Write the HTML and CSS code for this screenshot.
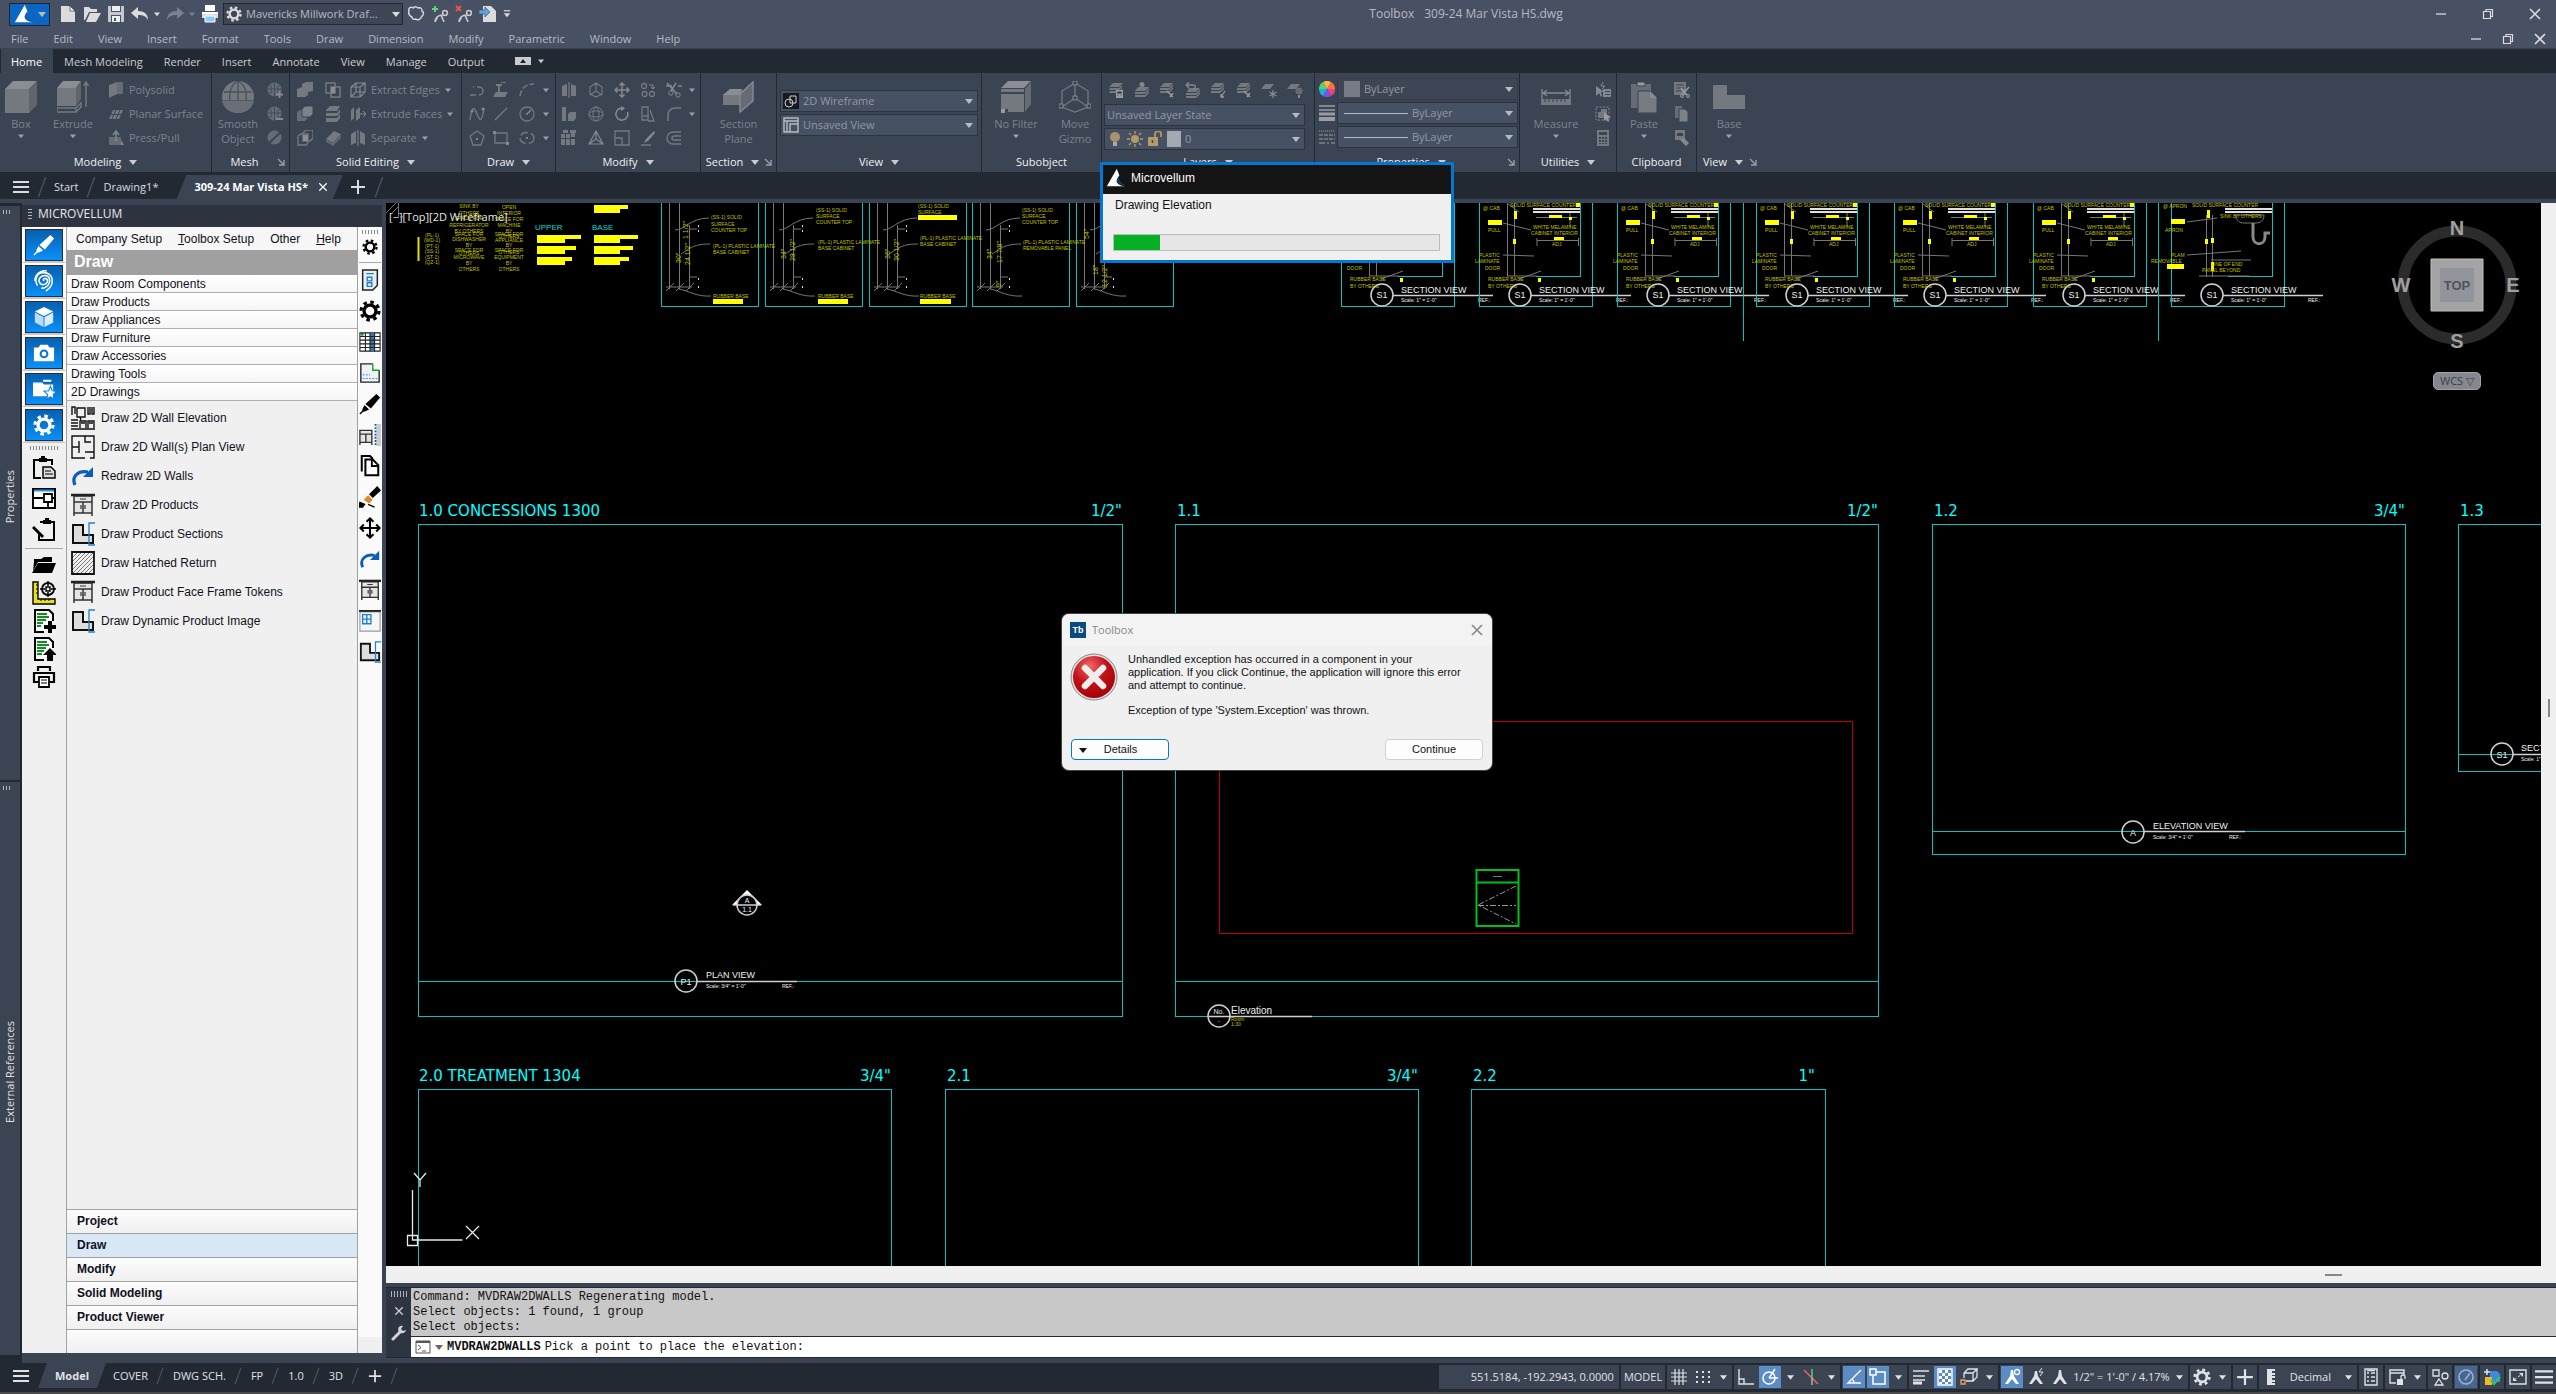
FILE: index.html
```html
<!DOCTYPE html>
<html lang="en">
<head>
<meta charset="utf-8">
<title>Toolbox - 309-24 Mar Vista HS.dwg</title>
<link rel="stylesheet" href="styles.css">
</head>
<body>
<svg class="defs" aria-hidden="true">
  <defs>
    <radialGradient id="red" cx=".4" cy=".25" r=".8"><stop offset="0" stop-color="#ee6a6a"/><stop offset=".5" stop-color="#c41018"/><stop offset="1" stop-color="#a00008"/></radialGradient>
    <pattern id="hatch" width="4" height="4" patternUnits="userSpaceOnUse"><path d="M-1 5L5-1M-1 1L1-1M3 5L5 3" stroke="#555" stroke-width=".8"/></pattern>
  </defs>

  <!-- general -->
  <symbol id="tri" viewBox="0 0 8 8"><path d="M0 2h8L4 7z" fill="currentColor"/></symbol>
  <symbol id="triup" viewBox="0 0 8 8"><path d="M1 6h6L4 2z" fill="currentColor"/></symbol>
  <symbol id="launch" viewBox="0 0 8 8"><path d="M1 1l5 5M7 2v5H2" fill="none" stroke="currentColor" stroke-width="1.4"/></symbol>
  <symbol id="burger" viewBox="0 0 16 16"><path d="M0 3h16M0 8h16M0 13h16" stroke="currentColor" stroke-width="2"/></symbol>
  <symbol id="plus" viewBox="0 0 16 16"><path d="M8 1v14M1 8h14" stroke="currentColor" stroke-width="2"/></symbol>
  <symbol id="x" viewBox="0 0 16 16"><path d="M3 3l10 10M13 3L3 13" stroke="currentColor" stroke-width="1.6"/></symbol>
  <symbol id="min" viewBox="0 0 16 16"><path d="M3 8h10" stroke="currentColor" stroke-width="1.3"/></symbol>
  <symbol id="restore" viewBox="0 0 16 16"><path d="M3.500 5.500h7v7h-7zM6 5.500v-2h6.500v7h-2" fill="none" stroke="currentColor" stroke-width="1.2"/></symbol>
  <symbol id="gear" viewBox="0 0 24 24"><circle cx="12" cy="12" r="6.500" fill="none" stroke="currentColor" stroke-width="3.600"/><circle cx="12" cy="12" r="9.800" fill="none" stroke="currentColor" stroke-width="3.400" stroke-dasharray="3.850 3.850"/></symbol>
  <symbol id="slash" viewBox="0 0 10 24"><path d="M1 23L9 1" stroke="#4a5260" stroke-width="1.500"/></symbol>
  <symbol id="delta" viewBox="0 0 24 24"><path d="M13 1c-4 7-8 14-12 21h22c-6-1-9-3-10-5s1-5 3-8c-1-3-2-5-3-8z" fill="#fff"/><path d="M15 10c-3 3-3 7 1 9 2 1 5 2 7 2-4-3-7-5-8-11z" fill="#0a5ea8" opacity=".5"/></symbol>

  <!-- quick access -->
  <symbol id="q-new" viewBox="0 0 18 18"><path d="M2 1h8l6 6v10H2z" fill="#dcdcdc"/><path d="M11 1l5 5h-5z" fill="#fff" stroke="#485063" stroke-width=".8"/></symbol>
  <symbol id="q-open" viewBox="0 0 18 18"><path d="M1 2h5l2 2h6v3H6L2 15H1z" fill="#dcdcdc"/><path d="M7 8h11l-5 9H3z" fill="#dcdcdc"/></symbol>
  <symbol id="q-save" viewBox="0 0 18 18"><path d="M1 1h16v16H1z" fill="#c4c8ce"/><path d="M4 1h10v6H4zM4 10h10v7H4z" fill="#485063"/><path d="M5 1h8v5H5zM5 11h8v6H5z" fill="#eee"/><path d="M7 13h2v3H7z" fill="#485063"/></symbol>
  <symbol id="q-undo" viewBox="0 0 18 18"><path d="M7 2v4c6 0 10 3 10 9-2-4-5-5-10-5v4L0 8z" fill="currentColor"/></symbol>
  <symbol id="q-redo" viewBox="0 0 18 18"><path d="M11 2v4C5 6 1 9 1 15c2-4 5-5 10-5v4l7-6z" fill="currentColor"/></symbol>
  <symbol id="q-print" viewBox="0 0 18 18"><path d="M4 0h10v6H4z" fill="#fff"/><path d="M1 7h16v6H1z" fill="#dcdcdc"/><path d="M1 7h16v2H1z" fill="#fff"/><path d="M4 11h10v6H4z" fill="#8ccaff" stroke="#fff"/></symbol>
  <symbol id="q-cloud" viewBox="0 0 18 18"><path d="M2 6c-1-3 2-5 4-3 2-2 4-1 5 0 3-1 4 1 4 3 2 1 2 4 0 5-1 3-4 5-6 3-2 1-4 0-4-2-2-1-4-3-3-6z" fill="none" stroke="#dcdcdc" stroke-width="1.400"/></symbol>
  <symbol id="q-add" viewBox="0 0 18 18"><path d="M1 4h6M4 1v6" stroke="#5fd080" stroke-width="2"/><path d="M4 17c0-4 3-7 8-7M7 11l-3 6M10 10l3 7" stroke="#ccc" stroke-width="1.600" fill="none"/><circle cx="14" cy="8" r="2.400" fill="none" stroke="#ccc" stroke-width="1.500"/></symbol>
  <symbol id="q-del" viewBox="0 0 18 18"><path d="M1 1l5 5M6 1L1 6" stroke="#f05050" stroke-width="2"/><path d="M4 17c0-4 3-7 8-7M7 11l-3 6M10 10l3 7" stroke="#ccc" stroke-width="1.600" fill="none"/><circle cx="14" cy="8" r="2.400" fill="none" stroke="#ccc" stroke-width="1.500"/></symbol>
  <symbol id="q-imp" viewBox="0 0 18 18"><path d="M4 1h8l5 5v11H4z" fill="#dcdcdc"/><path d="M0 5h6V2l5 5-5 5V9H0z" fill="#58a6e8" stroke="#485063" stroke-width=".7"/></symbol>
  <symbol id="q-more" viewBox="0 0 8 10"><path d="M0 1h8" stroke="currentColor" stroke-width="1.500"/><path d="M0 4h8L4 9z" fill="currentColor"/></symbol>

  <!-- ribbon, large -->
  <symbol id="r-box" viewBox="0 0 32 32"><path d="M0 8L8 0h24l-8 8z" fill="#8a8d94"/><path d="M0 8h24v24H0z" fill="#74787f"/><path d="M24 8l8-8v24l-8 8z" fill="#5f646e"/></symbol>
  <symbol id="r-ext" viewBox="0 0 32 32"><path d="M0 7l6-7h18l-5 7z" fill="#8a8d94"/><path d="M0 7h19v18H0z" fill="#74787f"/><path d="M19 7l5-7v18l-5 7z" fill="#5f646e"/><path d="M0 27h19v4H0zM19 27l5-5v4l-5 5" fill="none" stroke="#74787f" stroke-width="1.500"/><path d="M29 2v24M26.500 5L29 1l2.500 4" stroke="#74787f" stroke-width="1.500" fill="none"/></symbol>
  <symbol id="r-smooth" viewBox="0 0 32 32"><circle cx="16" cy="16" r="16" fill="#74787f"/><path d="M2 11h28M0 20h32M16 0v20M16 0C8 4 7 12 8 20M16 0c8 4 9 12 8 20" fill="none" stroke="#4a515e" stroke-width="1.300"/><path d="M0 20c2 8 8 12 16 12s14-4 16-12z" fill="#696e77"/></symbol>
  <symbol id="r-section" viewBox="0 0 32 32"><path d="M0 14l7-6h12v16H0z" fill="#74787f"/><path d="M0 14l7-6h12l-3 6z" fill="#8a8d94"/><path d="M17 13L30 1v19L17 31z" fill="#666b75" stroke="#85888f" stroke-width="1.500"/></symbol>
  <symbol id="r-filter" viewBox="0 0 32 32"><path d="M1 7l7-7h23l-7 7z" fill="#8a8d94"/><path d="M1 8h23v3H1zM1 13h23v18H8v-3H1z" fill="#74787f"/><path d="M25 8l6-7v22l-6 8z" fill="#666b75"/><path d="M1 28h4v4H1z" fill="#999"/></symbol>
  <symbol id="r-gizmo" viewBox="0 0 32 32"><path d="M16 2L3 10v16l13 5 13-5V10zM16 2v15M3 26l13-9 13 9" fill="none" stroke="#74787f" stroke-width="1.300"/><path d="M14 0h4v4h-4zM0 23h4v4H0zM28 23h4v4h-4zM14 15h4v4h-4z" fill="#3b4453" stroke="#85888f"/></symbol>
  <symbol id="r-measure" viewBox="0 0 32 32"><path d="M2 8v10M30 8v10M3 12h26M7 9l-4 3 4 3M25 9l4 3-4 3" fill="none" stroke="#85888f" stroke-width="1.300"/><path d="M1 18h30v6H1z" fill="#74787f"/><path d="M5 18v3M9 18v3M13 18v3M17 18v3M21 18v3M25 18v3" stroke="#3b4453"/></symbol>
  <symbol id="r-paste" viewBox="0 0 32 32"><path d="M3 3h20v24H3z" fill="#676b74"/><path d="M9 1h8v4H9z" fill="#999" stroke="#3b4453"/><path d="M10 10h12l7 7v15H10z" fill="#777b82" stroke="#3b4453"/><path d="M22 10v7h7z" fill="#8a8d94"/></symbol>
  <symbol id="r-base" viewBox="0 0 32 32"><path d="M0 4h14v10h18v14H0z" fill="#74787f"/></symbol>

  <!-- ribbon, small -->
  <symbol id="s-poly" viewBox="0 0 16 16"><path d="M1 3l8-3v12L1 16z" fill="#74787f"/><path d="M9 0h6v12H9z" fill="#666b75"/></symbol>
  <symbol id="s-planar" viewBox="0 0 16 16"><path d="M5 4h10l-4 9H1z" fill="#74787f"/><path d="M3 8.500h10M8 4l-4 9M12 4l-4 9" stroke="#3b4453"/></symbol>
  <symbol id="s-press" viewBox="0 0 16 16"><path d="M1 7h12v8H1z" fill="#666b75"/><path d="M8 11V3M5 5l3-4 3 4" fill="none" stroke="#85888f" stroke-width="1.500"/><path d="M13 10v5h3z" fill="#85888f"/></symbol>
  <symbol id="s-globe" viewBox="0 0 16 16"><circle cx="7.500" cy="7.500" r="7" fill="#666b75"/><path d="M1 7h13M7.500 1v13M3 3c2 3 2 6 0 9M12 3c-2 3-2 6 0 9" fill="none" stroke="#444c59"/><path d="M9 13h7" stroke="#85888f" stroke-width="2"/></symbol>
  <symbol id="s-globep" viewBox="0 0 16 16"><circle cx="7.500" cy="7.500" r="7" fill="#666b75"/><path d="M1 7h13M7.500 1v13M3 3c2 3 2 6 0 9M12 3c-2 3-2 6 0 9" fill="none" stroke="#444c59"/><path d="M9 12.500h7M12.500 9v7" stroke="#85888f" stroke-width="2"/></symbol>
  <symbol id="s-globex" viewBox="0 0 16 16"><circle cx="7.500" cy="7.500" r="7" fill="#666b75"/><path d="M1 14L15 1" stroke="#3b4453" stroke-width="2"/></symbol>
  <symbol id="s-union" viewBox="0 0 16 16"><path d="M0 7l5-2V2l4-2h7v9l-5 1v3l-3 2H0z" fill="#74787f"/></symbol>
  <symbol id="s-sub" viewBox="0 0 16 16"><path d="M0 6l3-2h7v9l-2 2H0z" fill="#666b75"/><path d="M5 3l3-3h8v8l-3 3H5z" fill="#7d8188" stroke="#3b4453"/></symbol>
  <symbol id="s-sub2" viewBox="0 0 16 16"><path d="M1 6l3-2h7v9l-2 2H1z" fill="none" stroke="#74787f" stroke-width="1.300"/><path d="M6 3l3-3h7v8l-3 3H6z" fill="none" stroke="#74787f" stroke-width="1.300"/><path d="M6 5h5v6H6z" fill="#8a8d94"/></symbol>
  <symbol id="s-inter" viewBox="0 0 16 16"><path d="M1 1h9v10H1z" fill="none" stroke="#74787f" stroke-width="1.500"/><path d="M6 5h9v10H6z" fill="none" stroke="#74787f" stroke-width="1.500"/><path d="M6 5h4v6H6z" fill="#8a8d94"/></symbol>
  <symbol id="s-slice" viewBox="0 0 16 16"><path d="M1 4l4-4h10l-3 5H1zM1 7h11l3-4v4l-3 3H1zM1 12h11l3-4v4l-3 4H1z" fill="#74787f"/></symbol>
  <symbol id="s-fillet" viewBox="0 0 16 16"><path d="M1 9l8-8 7 3-8 9z" fill="#74787f"/><path d="M1 9v3l7 4v-3zM8 13v3l8-8V4z" fill="#5f646e"/></symbol>
  <symbol id="s-edges" viewBox="0 0 16 16"><path d="M1 5h9v10H1zM1 5l5-4h9l-5 4M15 1v9l-5 5M6 1v9l-5 5M6 10h9" fill="none" stroke="#85888f" stroke-width="1.200"/></symbol>
  <symbol id="s-faces" viewBox="0 0 16 16"><path d="M1 4l3-3v11l-3 3zM6 4l4-3v11l-4 3z" fill="#74787f"/><path d="M10 8h6M13 5l3 3-3 3" stroke="#85888f" fill="none"/></symbol>
  <symbol id="s-separate" viewBox="0 0 16 16"><path d="M1 4l5-3v12l-5 2zM15 4l-5-3v12l5 2z" fill="#74787f"/><path d="M8 0v16" stroke="#85888f"/></symbol>
  <symbol id="s-pline" viewBox="0 0 16 16"><path d="M1 13h6M10 13a4 4 0 000-8H8M4 5h1" fill="none" stroke="#74787f" stroke-width="1.500"/></symbol>
  <symbol id="s-presspull" viewBox="0 0 16 16"><path d="M3 10h12l-3 5H0z" fill="#74787f"/><path d="M6 11V3M3 3h6M8 0h5" stroke="#85888f" stroke-width="1.400"/></symbol>
  <symbol id="s-arc" viewBox="0 0 16 16"><path d="M1 14C2 6 7 2 15 2" fill="none" stroke="#74787f" stroke-width="1.500" stroke-dasharray="6 2"/></symbol>
  <symbol id="s-spline" viewBox="0 0 16 16"><path d="M1 14C3 0 5 0 8 8s5 8 7-6" fill="none" stroke="#74787f" stroke-width="1.400"/><circle cx="3" cy="5" r="1.500" fill="#85888f"/><circle cx="14" cy="3" r="1.500" fill="#85888f"/></symbol>
  <symbol id="s-line" viewBox="0 0 16 16"><path d="M2 14L14 2" stroke="#74787f" stroke-width="1.500"/></symbol>
  <symbol id="s-circle" viewBox="0 0 16 16"><circle cx="8" cy="8" r="7" fill="none" stroke="#74787f" stroke-width="1.300"/><path d="M8 8l4-4M7 8h2" stroke="#85888f" stroke-width="1.500"/></symbol>
  <symbol id="s-polygon" viewBox="0 0 16 16"><path d="M8 1l7 5-3 9H4L1 6z" fill="none" stroke="#74787f" stroke-width="1.300"/><path d="M7 8h2v2H7z" fill="#85888f"/></symbol>
  <symbol id="s-rect" viewBox="0 0 16 16"><path d="M2 3h12v10H2z" fill="none" stroke="#74787f" stroke-width="1.300"/><path d="M0 1h3v3H0zM13 12h3v3h-3z" fill="#85888f"/></symbol>
  <symbol id="s-ellipse" viewBox="0 0 16 16"><ellipse cx="8" cy="8" rx="7" ry="5.500" fill="none" stroke="#74787f" stroke-width="1.400" stroke-dasharray="8 3"/><path d="M7 7h2v2H7z" fill="#85888f"/></symbol>
  <symbol id="s-mirror" viewBox="0 0 16 16"><path d="M1 4l5-2v12H1zM15 4l-5-2v12h5z" fill="#74787f"/><path d="M8 0v16" stroke="#85888f"/></symbol>
  <symbol id="s-giz" viewBox="0 0 16 16"><path d="M8 1L2 5v7l6 3 6-3V5zM8 1v8M2 13l6-4 6 4" fill="none" stroke="#74787f" stroke-width="1.200"/></symbol>
  <symbol id="s-move" viewBox="0 0 16 16"><path d="M8 1v14M1 8h14M5.500 3.500L8 1l2.500 2.500M5.500 12.500L8 15l2.500-2.500M3.500 5.500L1 8l2.500 2.500M12.500 5.500L15 8l-2.500 2.500" fill="none" stroke="currentColor" stroke-width="1.500"/></symbol>
  <symbol id="s-copy" viewBox="0 0 16 16"><circle cx="4" cy="4" r="2.500" fill="none" stroke="#74787f" stroke-width="1.300"/><circle cx="4.500" cy="12" r="2.500" fill="none" stroke="#74787f" stroke-width="1.300"/><circle cx="12" cy="12" r="2.500" fill="none" stroke="#74787f" stroke-width="1.300"/><path d="M9 3h4v4M11 5l2 2 2-2" fill="none" stroke="#85888f"/></symbol>
  <symbol id="s-trim" viewBox="0 0 16 16"><path d="M1 1l10 11M10 1L5 9M0 4h6M12 4h4" stroke="#85888f" stroke-width="1.500"/><circle cx="12" cy="13" r="2.200" fill="none" stroke="#85888f"/><circle cx="5" cy="11" r="2.200" fill="none" stroke="#85888f"/></symbol>
  <symbol id="s-align" viewBox="0 0 16 16"><path d="M1 1h4v14H1zM7 8l2-2h6v6l-2 3H7z" fill="#74787f"/></symbol>
  <symbol id="s-rotg" viewBox="0 0 16 16"><circle cx="8" cy="8" r="7" fill="none" stroke="#74787f"/><ellipse cx="8" cy="8" rx="3" ry="7" fill="none" stroke="#74787f"/><ellipse cx="8" cy="8" rx="7" ry="3" fill="none" stroke="#74787f"/></symbol>
  <symbol id="s-rot" viewBox="0 0 16 16"><path d="M10 2.500A6 6 0 1013.500 6" fill="none" stroke="#85888f" stroke-width="1.600"/><path d="M7 0l4 2.500L7 5z" fill="#85888f"/></symbol>
  <symbol id="s-stretch" viewBox="0 0 16 16"><path d="M2 1h6v13H2zM10 4l4 11H8M3 10h6" fill="none" stroke="#74787f" stroke-width="1.300"/></symbol>
  <symbol id="s-corner" viewBox="0 0 16 16"><path d="M2 15V9c0-4 3-7 7-7h6" fill="none" stroke="#74787f" stroke-width="1.600"/></symbol>
  <symbol id="s-array" viewBox="0 0 16 16"><path d="M0 4h4v4H0zM5 4h4v4H5zM10 3h4v4h-4zM0 9h4v6H0zM5 9h4v6H5zM10 9h4v6h-4zM2 0h5v3H2zM9 0h6v3H9z" fill="#74787f"/></symbol>
  <symbol id="s-scaleg" viewBox="0 0 16 16"><path d="M8 1L1 14h14zM8 1v8M1 14l7-5 7 5" fill="none" stroke="#85888f" stroke-width="1.200"/></symbol>
  <symbol id="s-scale" viewBox="0 0 16 16"><path d="M1 1h14v14H1zM1 8h7v7H1z" fill="none" stroke="#74787f" stroke-width="1.300"/></symbol>
  <symbol id="s-erase" viewBox="0 0 16 16"><path d="M14 1L6 9l-2 4 4-2 7-8z" fill="#85888f"/><path d="M1 15h10" stroke="#74787f" stroke-width="1.500"/></symbol>
  <symbol id="s-offset" viewBox="0 0 16 16"><path d="M15 2H7a6 6 0 000 12h8M15 6H8a2 2 0 000 4h7" fill="none" stroke="#74787f" stroke-width="1.400"/></symbol>
  <symbol id="s-layers" viewBox="0 0 16 16"><path d="M5 1h10l-4 4H1zM2 6h9l3-3v2l-3 3H1zM2 9h9l3-3v2l-3 3H1z" fill="#74787f"/><path d="M8 8h7v8H8z" fill="#999ca2"/><path d="M9.500 10h4v1h-4zM9.500 13h1M12.500 13h1" stroke="#3b4453"/></symbol>
  <symbol id="s-layer2" viewBox="0 0 16 16"><circle cx="8" cy="2.500" r="2.500" fill="#85888f"/><path d="M4 5h11l-4 4H1zM1 10h10l4-4v2l-4 4H1zM1 13h10l4-4v2l-4 4H1z" fill="#74787f"/></symbol>
  <symbol id="s-layer3" viewBox="0 0 16 16"><path d="M5 1h9l-4 4H1zM1 6h9l4-4v2l-4 4H1zM1 9h9l4-4v2l-4 4H1z" fill="#74787f"/><path d="M8 9l6 6M14 11l-3 4" stroke="#999" stroke-width="1.500"/></symbol>
  <symbol id="s-layer5" viewBox="0 0 16 16"><path d="M4 6h11l-4 4H2zM1 11h10l4-4v2l-4 4H1zM1 14h10l4-4v2l-4 4H1z" fill="#74787f"/><path d="M1 3h7c3 0 3 3 1 4M4 0L1 3l3 3" fill="none" stroke="#85888f" stroke-width="1.300"/></symbol>
  <symbol id="s-layer6" viewBox="0 0 16 16"><path d="M5 1h9l-4 4H1zM1 6h9l4-4v2l-4 4H1zM1 9h9l4-4v2l-4 4H1z" fill="#74787f"/><path d="M15 9l-4 6M11 12v3h3" fill="none" stroke="#999" stroke-width="1.300"/></symbol>
  <symbol id="s-freeze" viewBox="0 0 16 16"><path d="M4 2h9L9 7H0z" fill="#74787f"/><path d="M12 8v8M8.500 10l7 4M15.500 10l-7 4" stroke="#85888f" stroke-width="1.300"/></symbol>
  <symbol id="s-off" viewBox="0 0 16 16"><path d="M4 2h9L9 7H0z" fill="#74787f"/><circle cx="12" cy="9" r="3.500" fill="#666b75"/><path d="M11 13h2v3h-2z" fill="#85888f"/></symbol>
  <symbol id="s-quick" viewBox="0 0 16 16"><path d="M1 4v10l3-3 2 4 1-1-1-4h3z" fill="#85888f"/><path d="M8 0L6 4h4L7 7" stroke="#85888f" fill="none"/><path d="M8 7h8v8H8z" fill="#85888f"/><path d="M10 9.500h5M10 12.500h5" stroke="#3b4453"/></symbol>
  <symbol id="s-selall" viewBox="0 0 16 16"><path d="M1 1h13v13H1z" fill="none" stroke="#85888f" stroke-dasharray="2 1.500"/><path d="M3 6h6v6H3zM6 3h6v6H6z" fill="#74787f"/><path d="M9 6v9l2-2 2 3 1-1-1-3h3z" fill="#9a9da3"/></symbol>
  <symbol id="s-calc" viewBox="0 0 16 16"><path d="M2 0h12v16H2z" fill="#74787f"/><path d="M4 2h8v3H4zM4 7h2v2H4zM7 7h2v2H7zM10 7h2v2h-2zM4 10h2v2H4zM7 10h2v2H7zM10 10h2v2h-2zM4 13h2v1H4zM7 13h2v1H7zM10 13h2v1h-2z" fill="#3b4453"/></symbol>
  <symbol id="s-cut" viewBox="0 0 16 16"><path d="M0 0h12v13H0z" fill="#74787f"/><path d="M2 3h8M2 6h8M2 9h5" stroke="#3b4453"/><path d="M7 6l6 7M15 5l-7 8" stroke="#9a9da3" stroke-width="1.300"/><circle cx="14" cy="14" r="1.500" fill="none" stroke="#9a9da3"/><circle cx="8" cy="14" r="1.500" fill="none" stroke="#9a9da3"/></symbol>
  <symbol id="s-copy2" viewBox="0 0 16 16"><path d="M1 0h7v12H1z" fill="#666b75"/><path d="M5 3h6l3 3v10H5z" fill="#7d8188" stroke="#3b4453"/></symbol>
  <symbol id="s-match" viewBox="0 0 16 16"><path d="M1 0h10v10H1z" fill="#74787f"/><path d="M3 3h6v3H3z" fill="#3b4453"/><path d="M6 9l4-1 5 5-3 3-5-5z" fill="#85888f"/></symbol>
  <symbol id="wheel" viewBox="0 0 16 16"><path d="M8 8L4 1a8 8 0 018 0z" fill="#ffb640"/><path d="M8 8l4-7a8 8 0 014 7z" fill="#ff7040"/><path d="M8 8h8a8 8 0 01-4 7z" fill="#f2407c"/><path d="M8 8l4 7a8 8 0 01-8 0z" fill="#7a50f0"/><path d="M8 8l-4 7a8 8 0 01-4-7z" fill="#20b0d0"/><path d="M8 8H0a8 8 0 014-7z" fill="#50d080"/></symbol>
  <symbol id="weights" viewBox="0 0 16 16"><path d="M0 1h16M0 5h16" stroke="#999ca2" stroke-width="1.500"/><path d="M0 9h16" stroke="#999ca2" stroke-width="3"/><path d="M0 14h16" stroke="#999ca2" stroke-width="4"/></symbol>
  <symbol id="types" viewBox="0 0 16 16"><path d="M0 2h16" stroke="#999ca2" stroke-dasharray="1 1"/><path d="M0 6h16M0 10h16" stroke="#999ca2" stroke-dasharray="4 1"/><path d="M0 14h16" stroke="#999ca2" stroke-dasharray="6 2 2 2"/></symbol>
  <symbol id="bulb" viewBox="0 0 16 16"><circle cx="8" cy="6" r="5" fill="#a8946a"/><path d="M6 11h4v4H6z" fill="#aaa"/></symbol>
  <symbol id="sun" viewBox="0 0 16 16"><circle cx="8" cy="8" r="4" fill="#b39b68"/><path d="M8 0v3M8 13v3M0 8h3M13 8h3M2 2l2 2M12 12l2 2M14 2l-2 2M2 14l2-2" stroke="#b39b68" stroke-width="1.300"/></symbol>
  <symbol id="lock" viewBox="0 0 16 16"><path d="M1 6h10v9H1z" fill="#b39b68"/><path d="M8 6V3a3 3 0 016 0v3" fill="none" stroke="#b39b68" stroke-width="1.800"/><path d="M5.500 9v3" stroke="#3b4453" stroke-width="1.500"/></symbol>

  <!-- palette -->
  <symbol id="p-marker" viewBox="0 0 24 24"><path d="M19 1l4 4-10 12-6-5z" fill="currentColor"/><path d="M6 13l5 5-4 2-4 1 1-4z" fill="currentColor"/><path d="M1 23l3-3" stroke="currentColor" stroke-width="1.500"/></symbol>
  <symbol id="p-finger" viewBox="0 0 24 24"><path d="M12 12c-2-2 1-4 3-2s0 6-4 6-6-5-3-8 9-3 10 2-3 10-9 10M5 17C1 11 4 4 10 3s11 3 11 9-4 9-7 11M2 12C2 4 9 0 15 1" fill="none" stroke="#fff" stroke-width="1.700"/></symbol>
  <symbol id="p-cube" viewBox="0 0 24 24"><path d="M12 1l10 5-10 5L2 6z" fill="#fff"/><path d="M2 7l9.500 5v11L2 18z" fill="#b9dcf8"/><path d="M22 7l-9.500 5v11l9.500-5z" fill="#d8ecfb"/></symbol>
  <symbol id="p-camera" viewBox="0 0 24 24"><path d="M1 6h5l2-3h8l2 3h5v15H1z" fill="#fff"/><circle cx="12" cy="13" r="3.700" fill="none" stroke="#0a78d0" stroke-width="2.200"/></symbol>
  <symbol id="p-star" viewBox="0 0 24 24"><path d="M0 5h10l2 2h10v13H0zM11 2h9v2h-9z" fill="#fff"/><path d="M19 9l2 5 5 .5-4 3.500 1 5-4-2.500-4 2.500 1-5-4-3.500 5-.5z" fill="#fff" stroke="#0a84e0" stroke-width="1.200"/></symbol>
  <symbol id="p-clip" viewBox="0 0 24 24"><path d="M20 9V4H2v18h7" fill="none" stroke="#000" stroke-width="2"/><path d="M7 2h8v4H7zM9 0h4v3H9z"/><path d="M11 11h8l4 4v7H11z" fill="#ddd" stroke="#000" stroke-width="1.500"/><path d="M13 15h6M13 18h8" stroke="#000"/></symbol>
  <symbol id="p-frame" viewBox="0 0 24 24"><path d="M1 2h22v19H1z" fill="#fff" stroke="#000" stroke-width="2"/><path d="M2 3.500h20" stroke="#2e90e0" stroke-width="2"/><path d="M1 11h10M12 7h8v8h-8zM16 15v6M20 11h3" fill="none" stroke="#000" stroke-width="1.800"/></symbol>
  <symbol id="p-edit" viewBox="0 0 24 24"><path d="M8 4h14v18H7v-6" fill="none" stroke="#000" stroke-width="2"/><path d="M11 2h8v4h-8zM13 0h4v3h-4z"/><path d="M1 9l10 10" stroke="#000" stroke-width="3"/></symbol>
  <symbol id="p-folder" viewBox="0 0 24 24"><path d="M2 9V6h7l3-2h8v5H6l-5 9z"/><path d="M6 10h18l-4 10H0z"/></symbol>
  <symbol id="p-ruler" viewBox="0 0 24 24"><path d="M1 1h5v17h17v5H1z" fill="#e8e020" stroke="#000" stroke-width="1.400"/><path d="M4 4h2M4 8h2M4 12h2M9 20v-2M13 20v-2M17 20v-2" stroke="#000"/><circle cx="16" cy="8" r="6" fill="none" stroke="#000" stroke-width="1.800"/><path d="M14 6h4v4h-4zM16 0v5M16 11v5M8 8h5M19 8h5" fill="none" stroke="#000" stroke-width="1.500"/></symbol>
  <symbol id="p-docp" viewBox="0 0 24 24"><path d="M21 12V5l-4-4H3v22h9" fill="#fff" stroke="#000" stroke-width="2"/><path d="M5 5h10M5 8h12M5 11h9M5 14h6M5 17h4" stroke="#109020" stroke-width="1.800"/><path d="M18 12v12M12 18h12" stroke="#000" stroke-width="4"/></symbol>
  <symbol id="p-docu" viewBox="0 0 24 24"><path d="M21 11V5l-4-4H3v22h9" fill="#fff" stroke="#000" stroke-width="2"/><path d="M5 5h10M5 8h12M5 11h9M5 14h7M5 17h5" stroke="#109020" stroke-width="1.800"/><path d="M18 11l7 7h-4v6h-6v-6h-4z"/></symbol>
  <symbol id="p-print" viewBox="0 0 24 24"><path d="M6 6V2h12v4M6 17H2V8h20v9h-4" fill="none" stroke="#000" stroke-width="2.200"/><path d="M7 12h10v10H7z" fill="#fff" stroke="#000" stroke-width="1.800"/><path d="M9 15h6M9 18h6" stroke="#000"/></symbol>
  <symbol id="i-elev" viewBox="0 0 24 24"><path d="M1 9V1h3v7M6 2h8v9H6zM17 1v7h2V1M21 1v7h2V1M0 14h7M0 17h7M0 20h7M9 22v-7h6v7M17 22v-7h6v7M10 17h4M18 17h4M0 23h24M9 11l1 3" fill="none" stroke="#111" stroke-width="1.400"/></symbol>
  <symbol id="i-plan" viewBox="0 0 24 24"><path d="M14 23H1V1h22v22h-4M1 12h7M8 6v12M14 1v6h6M14 17h9" fill="none" stroke="#111" stroke-width="1.400"/></symbol>
  <symbol id="i-redo" viewBox="0 0 24 24"><path d="M4 21C0 12 8 6 17 8" fill="none" stroke="#0a5eb8" stroke-width="3.200"/><path d="M22 3v10H12z" fill="#0a5eb8"/></symbol>
  <symbol id="i-cab" viewBox="0 0 24 24"><path d="M3 3h18v17H3z" fill="#e4e4e4" stroke="#333" stroke-width="1.500"/><path d="M0 2h24" stroke="#222" stroke-width="2.500"/><path d="M3 9h18M12 9v11M3 20v3M21 20v3" fill="none" stroke="#333" stroke-width="1.500"/><path d="M9 6h6M10 12v4M14 12v4" stroke="#333" stroke-width="1.200"/></symbol>
  <symbol id="i-sect" viewBox="0 0 24 24"><path d="M2 3h10v10h10v8H2z" fill="#ddd" stroke="#111" stroke-width="2"/><path d="M24 1h-6v22h6" fill="none" stroke="#1e80d0" stroke-width="1.300"/></symbol>
  <symbol id="i-hatch" viewBox="0 0 24 24"><path d="M1 1h22v22H1z" fill="url(#hatch)" stroke="#111" stroke-width="1.800"/></symbol>
  <symbol id="v-card" viewBox="0 0 24 24"><path d="M4 1h16v17l-5 5H4z" fill="#e8eef4" stroke="#222" stroke-width="1.600"/><path d="M8 5h8M9 9h5v4H9zM9 15h5v4H9z" fill="none" stroke="#1e80d0" stroke-width="1.500"/></symbol>
  <symbol id="v-table" viewBox="0 0 24 24"><path d="M1 2h22v20H1z" fill="#fff" stroke="#222" stroke-width="1.200"/><path d="M12 2h5v20h-5z" fill="#3b78b0"/><path d="M1 6h22M1 10h22M1 14h22M1 18h22M7 2v20M12 2v20M17 2v20" stroke="#222" stroke-width="1.200"/><path d="M2 2h3v3H2z" fill="#0a8a20"/></symbol>
  <symbol id="v-note" viewBox="0 0 24 24"><path d="M15 2H2v20h20V9" fill="#eef2f6" stroke="#222" stroke-width="1.500"/><path d="M15 2v7h7" fill="none" stroke="#20a020" stroke-width="1.500"/><path d="M4 14h8M4 18h16" stroke="#1e80d0" stroke-dasharray="2 1.500"/></symbol>
  <symbol id="v-cabd" viewBox="0 0 24 24"><path d="M1 7h13v13H1zM1 11h13M7.500 11v9M1 20v3M14 20v3" fill="#e4e4e4" stroke="#333" stroke-width="1.500"/><path d="M19 0h5v24h-5z" fill="#ccc"/><path d="M18 0v24" stroke="#0a5eb8" stroke-width="2" stroke-dasharray="2 1.500"/></symbol>
  <symbol id="v-docs" viewBox="0 0 24 24"><path d="M3 18V1h9l3 3" fill="none" stroke="#000" stroke-width="2.200"/><path d="M7 5h8l6 6v11H7z" fill="#fff" stroke="#000" stroke-width="2.200"/><path d="M14 5v7h7" fill="none" stroke="#000" stroke-width="2"/></symbol>
  <symbol id="v-brush" viewBox="0 0 24 24"><path d="M20 0l4 5-9 8-4-4z"/><path d="M10 10l5 5-4 4-6-4z" fill="#e08828"/><path d="M1 18l5 2-2 3H0zM10 20l7 3" stroke="#000" stroke-width="1.500"/></symbol>
  <symbol id="v-window" viewBox="0 0 24 24"><path d="M1 2h22v21H1z" fill="#f6f6f6" stroke="#999" stroke-width="1.200"/><path d="M0 1h24" stroke="#222" stroke-width="2"/><path d="M4 5h9v10H4zM8.500 5v10M4 10h9" fill="none" stroke="#1e80d0" stroke-width="1.500"/></symbol>

  <!-- status bar -->
  <symbol id="t-grid" viewBox="0 0 18 18"><path d="M5 1v16M9 1v16M13 1v16M1 5h16M1 9h16M1 13h16" stroke="currentColor" stroke-width="1.200"/></symbol>
  <symbol id="t-dots" viewBox="0 0 18 18"><path d="M2 4h14M2 9h14M2 14h14" stroke="currentColor" stroke-width="2" stroke-dasharray="2 4"/></symbol>
  <symbol id="t-ortho" viewBox="0 0 18 18"><path d="M2 1v15h15M2 11h5v5" fill="none" stroke="currentColor" stroke-width="1.400"/></symbol>
  <symbol id="t-polar" viewBox="0 0 18 18"><circle cx="8" cy="10" r="6" fill="none" stroke="currentColor" stroke-width="1.500"/><path d="M8 10h9M8 10l6-9" stroke="currentColor" stroke-width="1.400"/></symbol>
  <symbol id="t-iso" viewBox="0 0 18 18"><path d="M2 2l14 14" stroke="#f06060" stroke-width="1.500"/><path d="M10 1v9" stroke="#50d080" stroke-width="1.500"/><path d="M10 10v7" stroke="currentColor"/></symbol>
  <symbol id="t-track" viewBox="0 0 18 18"><path d="M16 2L3 15h13M9 15a5 5 0 00-2-4" fill="none" stroke="currentColor" stroke-width="1.400"/></symbol>
  <symbol id="t-snap" viewBox="0 0 18 18"><path d="M7 4h9v12H4V8M1 1h6v6H1z" fill="none" stroke="currentColor" stroke-width="1.500"/></symbol>
  <symbol id="t-lw" viewBox="0 0 18 18"><path d="M1 3h16M1 8h12M1 12h12" stroke="currentColor" stroke-width="1.600"/><path d="M1 15h9" stroke="currentColor" stroke-width="3"/></symbol>
  <symbol id="t-trans" viewBox="0 0 18 18"><path d="M2 1h14v16H2z" fill="none" stroke="currentColor" stroke-width="1.400"/><path d="M3 2h3v3H3zM9 2h3v3H9zM6 5h3v3H6zM12 5h3v3h-3zM3 8h3v3H3zM9 8h3v3H9zM6 11h3v3H6zM12 11h3v3h-3zM3 14h3v2H3zM9 14h3v2H9z" fill="currentColor"/></symbol>
  <symbol id="t-3d" viewBox="0 0 18 18"><path d="M4 5h9v8H6M4 5v5M4 5l4-4h9l-4 4M17 1v8l-4 4" fill="none" stroke="currentColor" stroke-width="1.300"/><path d="M1 12h4v4H1z" fill="none" stroke="#f0a060" stroke-width="1.300"/></symbol>
  <symbol id="t-ann" viewBox="0 0 18 18"><path d="M8 2h2l1 6 5 8h-3l-4-5-4 5H2l5-8z" fill="currentColor"/><circle cx="14" cy="4" r="2.500" fill="none" stroke="currentColor" stroke-width="1.300"/></symbol>
  <symbol id="t-anna" viewBox="0 0 18 18"><path d="M8 3h2l1 5 5 8h-3l-4-5-4 5H2l5-8z" fill="currentColor"/><path d="M15 0l-3 4h4l-3 4" stroke="currentColor" fill="none"/></symbol>
  <symbol id="t-anns" viewBox="0 0 18 18"><path d="M8 2h2l1 6 5 8h-3l-4-5-4 5H2l5-8z" fill="currentColor"/></symbol>
  <symbol id="t-ruler" viewBox="0 0 18 18"><path d="M5 1h8v2h-3v2h3v2h-3v1h3v2h-3v2h3v2h-3v1h3v2H5z" fill="currentColor"/></symbol>
  <symbol id="t-props" viewBox="0 0 18 18"><path d="M3 1h12v16H3z" fill="none" stroke="currentColor" stroke-width="1.400"/><path d="M5 5h2M9 5h4M5 9h2M9 9h4M5 13h2M9 13h4M5 2.500h8" stroke="currentColor" stroke-width="1.500"/></symbol>
  <symbol id="t-lockui" viewBox="0 0 18 18"><path d="M8 15H2V2h14v5M2 5h14" fill="none" stroke="currentColor" stroke-width="1.400"/><path d="M9 11h6v6H9z" fill="currentColor"/><path d="M13 11V9a2 2 0 014 0v2" fill="none" stroke="currentColor" stroke-width="1.300"/></symbol>
  <symbol id="t-iso2" viewBox="0 0 18 18"><path d="M2 2h6v6H2zM8 11l4 6H4z" fill="none" stroke="currentColor" stroke-width="1.300"/><circle cx="14" cy="8" r="3" fill="none" stroke="currentColor" stroke-width="1.300"/></symbol>
  <symbol id="t-hw" viewBox="0 0 18 18"><circle cx="9" cy="9" r="7" fill="none" stroke="#9ab4d4" stroke-width="1.500"/><path d="M8 12l5-7" stroke="#9ab4d4" stroke-width="1.500"/></symbol>
  <symbol id="t-perf" viewBox="0 0 18 18"><path d="M7 3h7l3 3v8H7z" fill="#3a8ae0"/><path d="M2 9h7v8H2z" fill="#f0b828"/><path d="M4 1v6M1 4h6" stroke="#e0e8f0" stroke-width="1.500"/><path d="M8 12l3 4 6-7" fill="none" stroke="#38c060" stroke-width="2.200"/></symbol>
  <symbol id="t-full" viewBox="0 0 18 18"><path d="M1 2h16v14H1z" fill="none" stroke="currentColor" stroke-width="1.400"/><path d="M10 5h4v4zM4 9v4h4z" fill="currentColor"/><path d="M5 12l8-6" stroke="currentColor" stroke-dasharray="3 2"/></symbol>
  <symbol id="wrench" viewBox="0 0 16 16"><path d="M2 14l7-7" stroke="currentColor" stroke-width="3" stroke-linecap="round"/><path d="M12 1c-4-1-6 3-4 6 2 2 6 2 7-2l-3 1-2-2z" fill="currentColor"/></symbol>
  <symbol id="prompt" viewBox="0 0 16 16"><path d="M1 2h14v12H1z" fill="#fff" stroke="#555"/><path d="M1 3h14" stroke="#555" stroke-width="2"/><path d="M3 6l3 2.500L3 11M7 12h4" fill="none" stroke="#555"/></symbol>
</svg>

<header class="title">
  <div class="bar">
    <button class="logo" aria-label="Application menu"><svg class="i20"><use href="#delta"/></svg><svg class="i8"><use href="#tri"/></svg></button>
    <nav class="quick" aria-label="Quick access">
      <button aria-label="New"><svg class="i18"><use href="#q-new"/></svg></button>
      <button aria-label="Open"><svg class="i18"><use href="#q-open"/></svg></button>
      <button aria-label="Save"><svg class="i18"><use href="#q-save"/></svg></button>
      <button aria-label="Undo"><svg class="i18"><use href="#q-undo"/></svg><svg class="i6"><use href="#tri"/></svg></button>
      <button aria-label="Redo" class="off"><svg class="i18"><use href="#q-redo"/></svg><svg class="i6"><use href="#tri"/></svg></button>
      <button aria-label="Plot"><svg class="i18"><use href="#q-print"/></svg></button>
    </nav>
    <button class="workspace"><svg class="i16"><use href="#gear"/></svg><span>Mavericks Millwork Draf...</span><svg class="i8"><use href="#tri"/></svg></button>
    <nav class="quick extra" aria-label="Custom tools">
      <button aria-label="Revision cloud"><svg class="i18"><use href="#q-cloud"/></svg></button>
      <button aria-label="Add"><svg class="i18"><use href="#q-add"/></svg></button>
      <button aria-label="Remove"><svg class="i18"><use href="#q-del"/></svg></button>
      <button aria-label="Import"><svg class="i18"><use href="#q-imp"/></svg></button>
      <button aria-label="Customize"><svg class="i8"><use href="#q-more"/></svg></button>
    </nav>
    <p class="file"><span>Toolbox</span><span>309-24 Mar Vista HS.dwg</span></p>
    <div class="win"><button aria-label="Minimize"><svg class="i16"><use href="#min"/></svg></button><button aria-label="Restore"><svg class="i16"><use href="#restore"/></svg></button><button aria-label="Close"><svg class="i16"><use href="#x"/></svg></button></div>
  </div>
  <div class="bar menubar">
    <nav class="menu" aria-label="Menu"><a href="#">File</a><a href="#">Edit</a><a href="#">View</a><a href="#">Insert</a><a href="#">Format</a><a href="#">Tools</a><a href="#">Draw</a><a href="#">Dimension</a><a href="#">Modify</a><a href="#">Parametric</a><a href="#">Window</a><a href="#">Help</a></nav>
    <div class="win doc"><button aria-label="Minimize drawing"><svg class="i16"><use href="#min"/></svg></button><button aria-label="Restore drawing"><svg class="i16"><use href="#restore"/></svg></button><button aria-label="Close drawing"><svg class="i16"><use href="#x"/></svg></button></div>
  </div>
</header>

<nav class="tabs" aria-label="Ribbon tabs"><a href="#" class="on">Home</a><a href="#">Mesh Modeling</a><a href="#">Render</a><a href="#">Insert</a><a href="#">Annotate</a><a href="#">View</a><a href="#">Manage</a><a href="#">Output</a><button class="fold" aria-label="Minimize ribbon"><svg class="up"><use href="#triup"/></svg><svg class="i6"><use href="#tri"/></svg></button></nav>

<section class="ribbon" aria-label="Ribbon">
  <div class="panel modeling"><div class="body">
      <button class="big"><svg><use href="#r-box"/></svg>Box<svg class="i6"><use href="#tri"/></svg></button>
      <button class="big"><svg><use href="#r-ext"/></svg>Extrude<svg class="i6"><use href="#tri"/></svg></button>
      <div class="list"><button><svg><use href="#s-poly"/></svg>Polysolid</button><button><svg><use href="#s-planar"/></svg>Planar Surface</button><button><svg><use href="#s-press"/></svg>Press/Pull</button></div>
    </div><h2><span>Modeling <svg class="i8"><use href="#tri"/></svg></span></h2></div>
  <div class="panel mesh"><div class="body">
      <button class="big two"><svg><use href="#r-smooth"/></svg>Smooth<br>Object</button>
      <div class="icons c1"><svg><use href="#s-globep"/></svg><svg><use href="#s-globe"/></svg><svg><use href="#s-globex"/></svg></div>
    </div><h2><span>Mesh</span><svg class="launch"><use href="#launch"/></svg></h2></div>
  <div class="panel solid"><div class="body">
      <div class="icons c2"><svg><use href="#s-union"/></svg><svg><use href="#s-inter"/></svg><svg><use href="#s-sub"/></svg><svg><use href="#s-slice"/></svg><svg><use href="#s-sub2"/></svg><svg><use href="#s-fillet"/></svg></div>
      <div class="list"><button><svg><use href="#s-edges"/></svg>Extract Edges<svg class="i6"><use href="#tri"/></svg></button><button><svg><use href="#s-faces"/></svg>Extrude Faces<svg class="i6"><use href="#tri"/></svg></button><button><svg><use href="#s-separate"/></svg>Separate<svg class="i6"><use href="#tri"/></svg></button></div>
    </div><h2><span>Solid Editing <svg class="i8"><use href="#tri"/></svg></span></h2></div>
  <div class="panel draw"><div class="body">
      <div class="icons c4"><svg><use href="#s-pline"/></svg><svg><use href="#s-presspull"/></svg><svg><use href="#s-arc"/></svg><svg class="i6"><use href="#tri"/></svg><svg><use href="#s-spline"/></svg><svg><use href="#s-line"/></svg><svg><use href="#s-circle"/></svg><svg class="i6"><use href="#tri"/></svg><svg><use href="#s-polygon"/></svg><svg><use href="#s-rect"/></svg><svg><use href="#s-ellipse"/></svg><svg class="i6"><use href="#tri"/></svg></div>
    </div><h2><span>Draw <svg class="i8"><use href="#tri"/></svg></span></h2></div>
  <div class="panel modify"><div class="body">
      <div class="icons c6"><svg><use href="#s-mirror"/></svg><svg><use href="#s-giz"/></svg><svg><use href="#s-move"/></svg><svg><use href="#s-copy"/></svg><svg><use href="#s-trim"/></svg><svg class="i6"><use href="#tri"/></svg><svg><use href="#s-align"/></svg><svg><use href="#s-rotg"/></svg><svg><use href="#s-rot"/></svg><svg><use href="#s-stretch"/></svg><svg><use href="#s-corner"/></svg><svg class="i6"><use href="#tri"/></svg><svg><use href="#s-array"/></svg><svg><use href="#s-scaleg"/></svg><svg><use href="#s-scale"/></svg><svg><use href="#s-erase"/></svg><svg><use href="#s-offset"/></svg></div>
    </div><h2><span>Modify <svg class="i8"><use href="#tri"/></svg></span></h2></div>
  <div class="panel section"><div class="body"><button class="big two"><svg><use href="#r-section"/></svg>Section<br>Plane</button></div><h2><span>Section <svg class="i8"><use href="#tri"/></svg></span><svg class="launch"><use href="#launch"/></svg></h2></div>
  <div class="panel view"><div class="body stack">
      <button class="combo"><svg class="i16 black" viewBox="0 0 16 16"><circle cx="6" cy="10" r="4" fill="none" stroke="#ccc"/><path d="M7 3h6v7H7z" fill="none" stroke="#ccc"/></svg><span>2D Wireframe</span><svg class="i8"><use href="#tri"/></svg></button>
      <button class="combo"><svg class="i16" viewBox="0 0 16 16"><path d="M1 1h14v14H1zM1 4h14M4 4v11M7 15V7h8" fill="none" stroke="#b8bcc2" stroke-width="1.400"/></svg><span>Unsaved View</span><svg class="i8"><use href="#tri"/></svg></button>
    </div><h2><span>View <svg class="i8"><use href="#tri"/></svg></span></h2></div>
  <div class="panel sub"><div class="body">
      <button class="big"><svg><use href="#r-filter"/></svg>No Filter<svg class="i6"><use href="#tri"/></svg></button>
      <button class="big two"><svg><use href="#r-gizmo"/></svg>Move<br>Gizmo</button>
    </div><h2><span>Subobject</span></h2></div>
  <div class="panel layers"><div class="body stack">
      <div class="row"><svg><use href="#s-layers"/></svg><svg><use href="#s-layer2"/></svg><svg><use href="#s-layer3"/></svg><svg><use href="#s-layer5"/></svg><svg><use href="#s-layer6"/></svg><svg><use href="#s-layer3"/></svg><svg><use href="#s-freeze"/></svg><svg><use href="#s-off"/></svg></div>
      <button class="combo"><span>Unsaved Layer State</span><svg class="i8"><use href="#tri"/></svg></button>
      <button class="combo"><svg class="i16"><use href="#bulb"/></svg><svg class="i16"><use href="#sun"/></svg><svg class="i16"><use href="#lock"/></svg><i class="chip light"></i><span>0</span><svg class="i8"><use href="#tri"/></svg></button>
    </div><h2><span>Layers <svg class="i8"><use href="#tri"/></svg></span></h2></div>
  <div class="panel props"><div class="body stack">
      <div class="prop"><svg class="i16"><use href="#wheel"/></svg><button class="combo flat"><i class="chip"></i><span>ByLayer</span><svg class="i8"><use href="#tri"/></svg></button></div>
      <div class="prop"><svg class="i16"><use href="#weights"/></svg><button class="combo"><i class="rule"></i><span>ByLayer</span><svg class="i8"><use href="#tri"/></svg></button></div>
      <div class="prop"><svg class="i16"><use href="#types"/></svg><button class="combo"><i class="rule"></i><span>ByLayer</span><svg class="i8"><use href="#tri"/></svg></button></div>
    </div><h2><span>Properties <svg class="i8"><use href="#tri"/></svg></span><svg class="launch"><use href="#launch"/></svg></h2></div>
  <div class="panel util"><div class="body">
      <button class="big"><svg><use href="#r-measure"/></svg>Measure<svg class="i6"><use href="#tri"/></svg></button>
      <div class="icons c1"><svg><use href="#s-quick"/></svg><svg><use href="#s-selall"/></svg><svg><use href="#s-calc"/></svg></div>
    </div><h2><span>Utilities <svg class="i8"><use href="#tri"/></svg></span></h2></div>
  <div class="panel clip"><div class="body">
      <button class="big"><svg><use href="#r-paste"/></svg>Paste<svg class="i6"><use href="#tri"/></svg></button>
      <div class="icons c1"><svg><use href="#s-cut"/></svg><svg><use href="#s-copy2"/></svg><svg><use href="#s-match"/></svg></div>
    </div><h2><span>Clipboard</span></h2></div>
  <div class="panel base"><div class="body"><button class="big"><svg><use href="#r-base"/></svg>Base<svg class="i6"><use href="#tri"/></svg></button></div><h2><span>View <svg class="i8"><use href="#tri"/></svg></span><svg class="launch"><use href="#launch"/></svg></h2></div>
</section>

<nav class="docs" aria-label="Drawings">
  <button aria-label="Drawing list"><svg class="i16"><use href="#burger"/></svg></button><svg class="slash"><use href="#slash"/></svg>
  <a href="#">Start</a><svg class="slash"><use href="#slash"/></svg><a href="#">Drawing1*</a>
  <a href="#" class="on">309-24 Mar Vista HS*<svg class="i12"><use href="#x"/></svg></a>
  <button aria-label="New drawing"><svg class="i16"><use href="#plus"/></svg></button><svg class="slash"><use href="#slash"/></svg>
</nav>

<main class="work">
  <aside class="rails"><div class="rail"><i class="dots"></i><span>Properties</span></div><div class="rail"><i class="dots"></i><span>External References</span></div></aside>

  <aside class="palette">
    <h1><i class="grip"></i>MICROVELLUM</h1>
    <div class="pbody">
      <div class="tools">
        <button class="tile" aria-label="Draw"><svg><use href="#p-marker"/></svg></button>
        <button class="tile" aria-label="Identify"><svg><use href="#p-finger"/></svg></button>
        <button class="tile" aria-label="Products"><svg><use href="#p-cube"/></svg></button>
        <button class="tile" aria-label="Render"><svg><use href="#p-camera"/></svg></button>
        <button class="tile" aria-label="Favorites"><svg><use href="#p-star"/></svg></button>
        <button class="tile" aria-label="Settings"><svg><use href="#gear"/></svg></button>
        <i class="dots"></i>
        <div class="stackicons"><svg><use href="#p-clip"/></svg><svg><use href="#p-frame"/></svg><svg><use href="#p-edit"/></svg></div>
        <hr>
        <div class="stackicons tight"><svg><use href="#p-folder"/></svg><svg><use href="#p-ruler"/></svg><svg><use href="#p-docp"/></svg><svg><use href="#p-docu"/></svg><svg><use href="#p-print"/></svg></div>
      </div>
      <div class="content">
        <nav class="pmenu" aria-label="Palette menu"><a href="#">Company Setup</a><a href="#"><u>T</u>oolbox Setup</a><a href="#">Other</a><a href="#"><u>H</u>elp</a></nav>
        <h2>Draw</h2>
        <ul class="groups"><li>Draw Room Components</li><li>Draw Products</li><li>Draw Appliances</li><li>Draw Furniture</li><li>Draw Accessories</li><li>Drawing Tools</li><li>2D Drawings</li></ul>
        <ul class="items">
          <li><svg><use href="#i-elev"/></svg>Draw 2D Wall Elevation</li>
          <li><svg><use href="#i-plan"/></svg>Draw 2D Wall(s) Plan View</li>
          <li><svg><use href="#i-redo"/></svg>Redraw 2D Walls</li>
          <li><svg><use href="#i-cab"/></svg>Draw 2D Products</li>
          <li><svg><use href="#i-sect"/></svg>Draw Product Sections</li>
          <li><svg><use href="#i-hatch"/></svg>Draw Hatched Return</li>
          <li><svg><use href="#i-cab"/></svg>Draw Product Face Frame Tokens</li>
          <li><svg><use href="#i-sect"/></svg>Draw Dynamic Product Image</li>
        </ul>
        <ul class="modes"><li>Project</li><li class="on">Draw</li><li>Modify</li><li>Solid Modeling</li><li>Product Viewer</li><li></li></ul>
      </div>
      <div class="side">
        <i class="dots"></i><svg class="i16"><use href="#gear"/></svg><hr>
        <div class="sideicons"><svg><use href="#v-card"/></svg><svg><use href="#gear"/></svg><svg><use href="#v-table"/></svg><svg><use href="#v-note"/></svg><svg><use href="#p-marker"/></svg><svg><use href="#v-cabd"/></svg><svg><use href="#v-docs"/></svg><svg><use href="#v-brush"/></svg><svg><use href="#s-move"/></svg><svg><use href="#i-redo"/></svg><svg><use href="#i-cab"/></svg><svg><use href="#v-window"/></svg><svg><use href="#i-sect"/></svg></div>
      </div>
    </div>
  </aside>

  <section class="stage">
    <div class="viewport">
      <!-- model space, one unit per pixel -->
      <svg class="model" role="img" aria-label="Model space drawing">
        <path d="M0 10L10 0M6 10L13 3M12.500 0v14M17 14h-3" class="g"/>
        <g class="y mid"><text x="83" y="5">SINK BY</text><text x="83" y="12">OTHERS</text><text x="83" y="17">SPACE FOR</text><text x="83" y="24">REFRIGERATOR</text><text x="83" y="30">BY OTHERS</text><text x="83" y="33">SPACE FOR</text><text x="83" y="38">DISHWASHER</text><text x="83" y="44">BY</text><text x="83" y="49">SPACE FOR</text><text x="83" y="52">OTHERS</text><text x="83" y="56">MICROWAVE</text><text x="83" y="62">BY</text><text x="83" y="68">OTHERS</text>
          <text x="123" y="6">OPEN</text><text x="123" y="12">INTERIOR</text><text x="123" y="18">SPACE FOR</text><text x="123" y="24">MACHINE</text><text x="123" y="30">BY</text><text x="123" y="33">SPACE FOR</text><text x="123" y="35">OTHERS</text><text x="123" y="39">APPLIANCE</text><text x="123" y="44">BY</text><text x="123" y="49">SPACE FOR</text><text x="123" y="51">OTHERS</text><text x="123" y="56">EQUIPMENT</text><text x="123" y="62">BY</text><text x="123" y="68">OTHERS</text>
          <text x="46" y="34">(PL-1)</text><text x="46" y="39">(WD-1)</text><text x="46" y="45">(PT-1)</text><text x="46" y="50">(SS-1)</text><text x="46" y="56">(ST-1)</text><text x="46" y="61">(QZ-1)</text></g>
        <path d="M32.500 34v24" stroke="#dede00" stroke-width="2"/>
        <text x="149" y="27" class="c8">UPPER</text><text x="206" y="27" class="c8">BASE</text>
        <path d="M151 32h44v4h-16v4h-28zM151 43h39v4h-11v4h-28zM151 54h35v4h-7v4h-28zM208 32h44v4h-18v4h-26zM208 43h39v4h-13v4h-26zM208 54h35v4h-9v4h-26zM208 2h34v4h-8v4h-26z" class="yf"/>
        <text x="3" y="18" class="label">[−][Top][2D Wireframe]</text>

        <g class="dim" data-x="275"/><g class="dim" data-x="379"/><g class="dim" data-x="483"/><g class="dim" data-x="586"/><g class="dim" data-x="690"/>
        <g class="y"><text x="325" y="16">(SS-1) SOLID</text><text x="325" y="23">SURFACE</text><text x="325" y="29">COUNTER TOP</text><text x="327" y="45">(PL-1) PLASTIC LAMINATE</text><text x="327" y="51">BASE CABINET</text><text x="327" y="95">RUBBER BASE</text>
          <text x="430" y="9">(SS-1) SOLID</text><text x="430" y="15">SURFACE</text><text x="430" y="21">COUNTER TOP</text><text x="432" y="41">(PL-1) PLASTIC LAMINATE</text><text x="432" y="47">BASE CABINET</text><text x="432" y="95">RUBBER BASE</text>
          <text x="532" y="5">(SS-1) SOLID</text><text x="532" y="11">SURFACE</text><text x="534" y="37">(PL-1) PLASTIC LAMINATE</text><text x="534" y="43">BASE CABINET</text><text x="534" y="95">RUBBER BASE</text>
          <text x="636" y="9">(SS-1) SOLID</text><text x="636" y="15">SURFACE</text><text x="636" y="21">COUNTER TOP</text><text x="637" y="41">(PL-1) PLASTIC LAMINATE</text><text x="637" y="47">REMOVABLE PANEL</text></g>
        <path d="M327 96h30v5h-30zM432 96h30v5h-30zM534 96h31v5h-31zM532 12h39v5h-39z" class="yf"/>
        <g class="y t7"><text transform="translate(295 60) rotate(-90)">30"</text><text transform="translate(304 62) rotate(-90)">24 1/2"</text><text transform="translate(302 36) rotate(-90)">1 1/2"</text><text transform="translate(400 56) rotate(-90)">34"</text><text transform="translate(409 58) rotate(-90)">28 1/2"</text><text transform="translate(504 56) rotate(-90)">36"</text><text transform="translate(513 58) rotate(-90)">30 1/2"</text><text transform="translate(606 56) rotate(-90)">34"</text><text transform="translate(616 60) rotate(-90)">17 7/8"</text><text transform="translate(615 84) rotate(-90)">9"</text><text transform="translate(703 36) rotate(-90)">54"</text><text transform="translate(712 72) rotate(-90)">18"</text><text transform="translate(721 84) rotate(-90)">12 1/2"</text></g>

        <g class="sect" data-x="955"/><g class="sect" data-x="1093"/><g class="sect" data-x="1231"/><g class="sect" data-x="1370"/><g class="sect" data-x="1508"/><g class="sect" data-x="1647"/>
        <g transform="translate(1785 0)">
          <path d="M.5 0v103.500h113V0M101.500 0v73.500H57" class="c"/><path d="M35.500 12v62M41.500 12v62M28 73h50M40 57h40M16 52l54-4M16 19l30-4" class="g"/>
          <path d="M65 12h28c0 6-4 8-8 8H73c-4 0-8-2-8-8" fill="none" stroke="#777"/><path d="M82 20v14c0 9 12 9 12 0v-4h5" fill="none" stroke="#888" stroke-width="3"/><path d="M54 6h47M54 9h47" class="w2"/>
          <path d="M0 16h14v5H0zM-4 61h17v5H-4zM36 7h3v8h-3zM34 36h3v5h-3zM40 35h3v5h-3zM40 59h3v9h-3z" class="yf"/>
          <g class="y"><text x="-8" y="5">@ APRON</text><text x="-6" y="29">APRON</text><text x="0" y="54">PLAM</text><text x="-20" y="60">REMOVABLE</text><text x="49" y="15">SINK BY OTHERS</text><text x="21" y="4">SOLID SURFACE COUNTER</text><text x="40" y="63">LINE OF END</text><text x="31" y="69">PANEL BEYOND</text></g>
          <circle cx="41" cy="92" r="11" class="w"/><text x="41" y="95" class="t9 mid">S1</text><text x="60" y="90" class="t9">SECTION VIEW</text><path d="M52 92.500h100" class="w"/><text x="60" y="99" class="t5">Scale: 1" = 1'-0"</text><text x="137" y="99" class="t5">REF.:</text>
        </g>
        <path d="M1357.500 0v138M1772.500 0v138" class="c"/>

        <g class="c"><path d="M32.500 321.500h704v492h-704zM32.500 778.500h704"/><path d="M789.500 321.500h703v492h-703zM789.500 778.500h703"/><path d="M1546.500 321.500h473v330h-473zM1546.500 628.500h473"/><path d="M2400 321.500h-327.500v247H2400M2072.500 551.500H2400"/><path d="M32.500 1400V886.500h473V1400M559.500 1400V886.500h473V1400M1085.500 1400V886.500h354V1400"/></g>
        <path d="M833.500 518.500h633v212h-633z" fill="none" stroke="#c00000"/>
        <g class="c15"><text x="33" y="313">1.0 CONCESSIONS 1300</text><text x="736" y="313" class="end">1/2"</text><text x="791" y="313">1.1</text><text x="1492" y="313" class="end">1/2"</text><text x="1548" y="313">1.2</text><text x="2019" y="313" class="end">3/4"</text><text x="2074" y="313">1.3</text><text x="33" y="878">2.0 TREATMENT 1304</text><text x="505" y="878" class="end">3/4"</text><text x="561" y="878">2.1</text><text x="1032" y="878" class="end">3/4"</text><text x="1087" y="878">2.2</text><text x="1429" y="878" class="end">1"</text></g>

        <circle cx="300" cy="778" r="11" class="w"/><text x="300" y="782" class="t9 mid">P1</text><text x="320" y="775" class="t9">PLAN VIEW</text><path d="M311 778.500h100" class="w"/><text x="320" y="785" class="t5">Scale: 3/4" = 1'-0"</text><text x="396" y="785" class="t5">REF.:</text>
        <path d="M361 687l15 15h-30z" fill="#fff"/><circle cx="361" cy="702" r="10" fill="#000" stroke="#ccc" stroke-width="1.500"/><path d="M347 702h28" class="w"/><text x="361" y="700" class="t7 mid">A</text><text x="361" y="709" class="t7 mid">1.1</text>
        <circle cx="833" cy="813" r="11" class="w"/><text x="833" y="811" class="t7 mid">No.</text><text x="833" y="820" class="y mid">–</text><text x="845" y="811" class="t10">Elevation</text><path d="M823 813.500h103" class="w"/><text x="845" y="818" class="y">Room</text><text x="845" y="823" class="y">1:30</text>
        <circle cx="1747" cy="629" r="11" class="w"/><text x="1747" y="633" class="t9 mid">A</text><text x="1767" y="626" class="t9">ELEVATION VIEW</text><path d="M1758 628.500h101" class="w"/><text x="1767" y="636" class="t5">Scale: 3/4" = 1'-0"</text><text x="1843" y="636" class="t5">REF.:</text>
        <circle cx="2116" cy="551" r="11" class="w"/><text x="2116" y="555" class="t9 mid">S1</text><text x="2135" y="548" class="t9">SECTION VIEW</text><path d="M2127 551.500h100" class="w"/><text x="2135" y="558" class="t5">Scale: 1" = 1'-0"</text>

        <path d="M1090.500 667h42v56h-42zM1090.500 679.500h42" fill="none" stroke="#00c020" stroke-width="2"/><path d="M1107 673.500h9" class="g"/><path d="M1130 683l-38 19 38 19M1092 702.500h38" fill="none" stroke="#999" stroke-dasharray="6 2 2 2"/>

        <path d="M26.500 987v50h50M21.500 1032.500h10v10h-10zM28 970l6 7 6-7M34 977v7M80 1023l13 13M93 1023l-13 13" fill="none" stroke="#e8e8e8" stroke-width="1.300"/>
      </svg>

      <div class="cube">
        <svg viewBox="0 0 140 144" width="140" height="144"><circle cx="70" cy="70" r="54" fill="none" stroke="#2b2b2b" stroke-width="11"/><path d="M44 44h52v52H44z" fill="#a4a4a4" stroke="#c0c0c0"/><path d="M53 53h34v34H53z" fill="#92949c"/><text x="70" y="75" class="top">TOP</text><g class="nesw"><text x="70" y="20">N</text><text x="70" y="133">S</text><text x="14" y="77">W</text><text x="126" y="77">E</text></g></svg>
        <button class="wcs">WCS ▽</button>
      </div>
    </div>
    <div class="vscroll"><i></i></div>
    <div class="hscroll"><i></i></div>
    <div class="command">
      <div class="handle"><i class="dots"></i><svg class="i12"><use href="#x"/></svg><svg class="i16"><use href="#wrench"/></svg></div>
      <div class="lines">
        <pre>Command: MVDRAW2DWALLS Regenerating model.
Select objects: 1 found, 1 group
Select objects:</pre>
        <label class="prompt"><svg class="i16"><use href="#prompt"/></svg><svg class="i8"><use href="#tri"/></svg><b>MVDRAW2DWALLS</b><input type="text" value="Pick a point to place the elevation:" aria-label="Command input"></label>
      </div>
    </div>
  </section>
</main>

<footer class="status">
  <nav class="layouts" aria-label="Layouts"><button aria-label="Layout list"><svg class="i16"><use href="#burger"/></svg></button><a href="#" class="on">Model</a><a href="#">COVER</a><svg class="slash"><use href="#slash"/></svg><a href="#">DWG SCH.</a><svg class="slash"><use href="#slash"/></svg><a href="#">FP</a><svg class="slash"><use href="#slash"/></svg><a href="#">1.0</a><svg class="slash"><use href="#slash"/></svg><a href="#">3D</a><svg class="slash"><use href="#slash"/></svg><button aria-label="New layout"><svg class="i14"><use href="#plus"/></svg></button><svg class="slash"><use href="#slash"/></svg></nav>
  <div class="modesbar">
    <span class="cell coords">551.5184, -192.2943, 0.0000</span>
    <button class="cell word">MODEL</button>
    <div class="cell"><svg><use href="#t-grid"/></svg><svg><use href="#t-dots"/></svg><svg class="dd"><use href="#tri"/></svg></div>
    <div class="cell"><svg><use href="#t-ortho"/></svg><svg class="on"><use href="#t-polar"/></svg><svg class="dd"><use href="#tri"/></svg><svg><use href="#t-iso"/></svg><svg class="dd"><use href="#tri"/></svg></div>
    <div class="cell"><svg class="on"><use href="#t-track"/></svg><svg class="on"><use href="#t-snap"/></svg><svg class="dd"><use href="#tri"/></svg></div>
    <div class="cell"><svg><use href="#t-lw"/></svg><svg class="on"><use href="#t-trans"/></svg><svg><use href="#t-3d"/></svg><svg class="dd"><use href="#tri"/></svg></div>
    <div class="cell"><svg class="on"><use href="#t-ann"/></svg><svg><use href="#t-anna"/></svg><svg><use href="#t-anns"/></svg><span>1/2" = 1'-0" / 4.17%</span><svg class="dd"><use href="#tri"/></svg></div>
    <div class="cell"><svg><use href="#gear"/></svg><svg class="dd"><use href="#tri"/></svg></div>
    <div class="cell"><svg><use href="#plus"/></svg></div>
    <div class="cell"><svg><use href="#t-ruler"/></svg><span class="unit">Decimal</span><svg class="dd"><use href="#tri"/></svg></div>
    <div class="cell"><svg><use href="#t-props"/></svg></div>
    <div class="cell"><svg><use href="#t-lockui"/></svg><svg class="dd"><use href="#tri"/></svg></div>
    <div class="cell"><svg><use href="#t-iso2"/></svg></div>
    <div class="cell"><svg class="on dim"><use href="#t-hw"/></svg></div>
    <div class="cell"><svg><use href="#t-perf"/></svg></div>
    <div class="cell"><svg><use href="#t-full"/></svg></div>
    <div class="cell"><svg><use href="#burger"/></svg></div>
  </div>
</footer>

<section class="progress" role="dialog" aria-label="Microvellum">
  <h2><svg class="i20"><use href="#delta"/></svg>Microvellum</h2>
  <div class="pcontent"><span>Drawing Elevation</span><div class="track" role="progressbar" aria-valuenow="14" aria-label="Drawing Elevation"><i style="width:14%"></i></div></div>
</section>

<section class="error" role="alertdialog" aria-label="Toolbox">
  <h2><i class="tb">Tb</i><span>Toolbox</span><button aria-label="Close"><svg class="i16"><use href="#x"/></svg></button></h2>
  <div class="message">
    <svg width="48" height="48" viewBox="0 0 48 48"><circle cx="24" cy="24" r="23" fill="#ddd" stroke="#888"/><circle cx="24" cy="24" r="21" fill="url(#red)"/><path d="M15 15l18 18M33 15L15 33" stroke="#eee" stroke-width="6.500" stroke-linecap="round"/></svg>
    <div><p>Unhandled exception has occurred in a component in your<br>application. If you click Continue, the application will ignore this error<br>and attempt to continue.</p><p>Exception of type 'System.Exception' was thrown.</p></div>
  </div>
  <div class="actions"><button class="details"><svg class="i8"><use href="#tri"/></svg><span>Details</span></button><button>Continue</button></div>
</section>
<script src="drawing.js"></script>
</body>
</html>
```
FILE: drawing.js
```js
// Repeated details of the drawing; each block is drawn from the left edge of its frame.
const section = `
  <path d="M.5 0v103.500h113V0" class="c"/><path d="M101.500 0v73.500H57" class="c"/>
  <path d="M28.500 0v73M35.500 0v73M28 73h30M40 76l22-8M24 20l28 7M24 52l31 1M28 0l12 9" class="g"/>
  <path d="M54 6h47M54 9h47" class="w2"/><path d="M57 14.500h41M58 37.500h42M58 35v8M99.500 35v8M91 10v14" class="g"/>
  <path d="M9 17h14v5H9zM35 8h3v8h-3zM34 36h3v5h-3zM70 12h13v3H70zM75 34h10v3H75zM90 14h3v3h-3zM97 0h4v4h-4zM59 75h3v4h-3z" class="yf"/>
  <g class="y"><text x="4" y="7">@ CAB</text><text x="9" y="29">PULL</text><text x="0" y="54">PLASTIC</text><text x="-4" y="60">LAMINATE</text><text x="6" y="67">DOOR</text><text x="9" y="78">RUBBER BASE</text><text x="9" y="85">BY OTHERS</text><text x="31" y="4">SOLID SURFACE COUNTER</text><text x="54" y="26">WHITE MELAMINE</text><text x="52" y="32">CABINET INTERIOR</text><text x="73" y="43">ADJ</text></g>
  <circle cx="41" cy="92" r="11" class="w"/><text x="41" y="95" class="t9 mid">S1</text>
  <text x="60" y="90" class="t9">SECTION VIEW</text><path d="M52 92.500h100" class="w"/>
  <text x="60" y="99" class="t5">Scale: 1" = 1'-0"</text><text x="137" y="99" class="t5">REF.:</text>`;
const dimension = `
  <path d="M.5 0v103.500h97V0" class="c"/>
  <path d="M8.500 0v86M18.500 0v86M28.500 22v64M5 84h26M5 88l8-8M15 88l8-8M25 88l8-8M28 74h8M28 26h8M14 27c10 0 15-12 34-12M20 51c8-4 10-10 29-10M18 86c10 2 18 8 32 7" class="g"/>
  <path d="M37 23h1M37 28h1M37 76h1M37 84h1" class="w2"/>`;

for (const [name, markup] of [["sect", section], ["dim", dimension]]) {
  for (const g of document.querySelectorAll(`.model .${name}`)) {
    g.setAttribute("transform", `translate(${g.dataset.x} 0)`);
    g.innerHTML = markup;
  }
}
```
FILE: styles.css
```css
* { box-sizing: border-box; }
body { margin: 0; height: 100vh; min-height: 700px; display: flex; flex-direction: column; overflow: hidden; position: relative; background: #3b4453; color: #c8ccd2; font: 12px/16px "Open Sans", "Noto Sans", sans-serif; }
button { margin: 0; padding: 0; border: 0; background: none; color: inherit; font: inherit; }
a { color: inherit; text-decoration: none; }
h1, h2, p, ul, pre { margin: 0; padding: 0; font-size: 12px; font-weight: 400; list-style: none; }
svg { display: block; flex: none; }
.defs { position: absolute; width: 0; height: 0; }
.i6 { width: 6px; height: 6px; } .i8 { width: 8px; height: 8px; } .i12 { width: 12px; height: 12px; } .i14 { width: 14px; height: 14px; }
.i16 { width: 16px; height: 16px; } .i18 { width: 18px; height: 18px; } .i20 { width: 20px; height: 20px; }

/* title and menu */
.title { background: #485063; border-bottom: 1px solid #3b4453; font-size: 11px; color: #b6bac2; }
.bar { display: flex; align-items: center; height: 28px; padding-left: 9px; }
.menubar { height: 20px; padding: 2px 0 0 11px; }
.logo { display: flex; align-items: center; justify-content: center; gap: 4px; width: 41px; height: 23px; border: 1px solid #1c2530; background: #0a66c2; }
.quick { display: flex; align-items: center; gap: 6px; margin-left: 9px; color: #dcdcdc; }
.quick button { display: flex; align-items: center; gap: 5px; }
.quick .off { color: #7a8290; }
.workspace { display: flex; align-items: center; gap: 4px; width: 180px; height: 22px; margin-left: 4px; padding: 0 2px; border: 1px solid #222933; background: #3e4656; }
.workspace span { flex: 1; text-align: left; white-space: nowrap; }
.workspace svg { color: #dcdcdc; }
.extra { margin-left: 4px; }
.file { flex: 1; display: flex; justify-content: center; gap: 10px; padding-right: 12px; }
.win { display: flex; gap: 31px; padding-right: 13px; color: #dcdcdc; }
.win.doc { gap: 16px; margin-left: auto; padding-right: 8px; }
.menu { display: flex; gap: 25px; }

/* ribbon */
.tabs { display: flex; align-items: center; height: 24px; background: #222933; font-size: 11px; }
.tabs a { height: 24px; padding: 2px 11px 0 10px; line-height: 22px; }
.tabs .on { margin: 0 1px; background: #3b4453; color: #fff; }
.fold { display: flex; align-items: center; gap: 7px; margin-left: 20px; }
.fold .up { width: 16px; height: 8px; background: #c8ccd2; color: #222; }
.ribbon { display: flex; height: 99px; font-size: 11px; color: #7d838e; }
.panel { display: flex; flex-direction: column; flex: none; border-right: 1px solid #222933; padding-top: 5px; }
.body { display: flex; height: 74px; }
.panel h2 { display: flex; align-items: center; height: 20px; font-size: 11px; color: #f0f0f0; }
.panel h2 span { flex: 1; display: flex; align-items: center; justify-content: center; gap: 8px; }
.panel h2 .i8 { color: #c8ccd2; }
.launch { width: 8px; height: 8px; margin-right: 4px; color: #9a9ea6; }
.big { display: flex; flex-direction: column; align-items: center; padding-top: 3px; line-height: 15px; white-space: nowrap; }
.big > svg:first-child { width: 32px; height: 32px; margin-bottom: 3px; }
.big .i6 { margin-top: 2px; color: #9a9ea6; }
.list { display: flex; flex-direction: column; }
.list button { display: flex; align-items: center; gap: 5px; height: 24px; white-space: nowrap; }
.list svg, .icons svg, .row svg { width: 16px; height: 16px; }
.list .i6, .icons .i6 { width: 6px; height: 6px; color: #9a9ea6; }
.icons { display: grid; grid-auto-rows: 24px; place-items: center; color: #85888f; }
.c1 { grid-template-columns: 22px; } .c2 { grid-template-columns: 28px 28px; } .c4 { grid-template-columns: 24px 24px 28px 10px; } .c6 { grid-template-columns: 26px 28px 24px 28px 24px 12px; }
.modeling { width: 212px; } .modeling .big { width: 42px; } .modeling .big + .big { width: 62px; } .modeling .list { padding-left: 4px; }
.mesh { width: 78px; } .mesh .big { width: 52px; }
.solid { width: 172px; } .solid .body { padding-left: 1px; gap: 3px; }
.draw { width: 94px; } .draw .body { padding-left: 3px; }
.modify { width: 145px; }
.section { width: 76px; } .section .big { flex: 1; }
.view { width: 205px; } .view .stack { padding: 12px 3px 0; }
.sub { width: 120px; } .sub .big { width: 68px; } .sub .big + .big { width: 50px; }
.layers { width: 213px; } .layers .stack { padding: 0 9px 0 2px; }
.props { width: 205px; } .props .stack { padding: 0 1px 0 4px; }
.util { width: 97px; } .util .big { width: 72px; }
.clip { width: 80px; } .clip .big { width: 54px; }
.base { width: 64px; border: 0; } .base .big { flex: 1; }
.stack { flex-direction: column; gap: 2px; }
.combo { display: flex; align-items: center; gap: 4px; flex: 1; width: 100%; min-height: 22px; max-height: 22px; padding: 0 4px 0 2px; border: 1px solid #2c333f; background: #475164; color: #9298a2; }
.combo span { flex: 1; text-align: left; }
.combo > .i8 { color: #b8bcc2; }
.combo.flat { background: #3e4655; border-color: #343c49; }
.black { background: #161a20; }
.row { display: flex; justify-content: space-between; align-items: center; height: 24px; padding: 0 2px 0 4px; }
.prop { display: flex; align-items: center; gap: 2px; height: 22px; }
.chip { width: 16px; height: 16px; margin-left: 4px; background: #767b85; } .chip.light { width: 14px; margin: 0; background: #a4a9b2; }
.rule { width: 64px; height: 1px; margin-left: 4px; background: #b8bcc2; }

/* drawing tabs */
.docs { display: flex; align-items: center; height: 27px; padding: 3px 0 0 13px; background: #222933; font-size: 11px; color: #d8dce2; }
.docs .slash { margin: 0 7px 0 8px; } .slash { width: 10px; height: 22px; }
.docs .on { display: flex; align-items: center; gap: 9px; height: 24px; margin: 0 4px 0 18px; padding: 0 14px 0 18px; background: #3b4453; clip-path: polygon(10px 0, 100% 0, calc(100% - 10px) 100%, 0 100%); color: #fff; font-weight: 700; }
.docs .on + button { padding-left: 3px; }

/* workspace */
.work { flex: 1; min-height: 0; display: flex; border-top: 4px solid #3b4453; }
.rails { display: flex; flex-direction: column; width: 22px; gap: 2px; padding: 3px 2px 8px 0; background: #222933; }
.rail { flex: 1; display: flex; flex-direction: column; align-items: center; background: #3b4453; color: #e0e0e0; padding-top: 4px; font-size: 11px; }
.rail span { margin: auto 0; writing-mode: vertical-rl; transform: rotate(180deg); }
.rail .dots { margin-left: -6px; }
.dots { display: block; width: 10px; height: 4px; background: radial-gradient(circle, #b0b4ba 1px, transparent 1px) 0 0 / 3px 2px; }
.palette { display: flex; flex-direction: column; width: 360px; padding: 2px 0 10px; background: #3b4453; }
.palette h1 { display: flex; align-items: center; gap: 6px; height: 22px; padding: 0 0 5px 6px; background: #2e3340; color: #e4e6ea; font: 12px/18px "Open Sans", sans-serif; }
.grip { width: 4px; height: 11px; background: radial-gradient(circle, #b0b4ba 1px, transparent 1px) 0 0 / 2px 3px; }
.pbody { flex: 1; min-height: 0; display: grid; grid-template-columns: 44px 1fr 24px; background: #f0f0f0; color: #101020; font: 12px/16px "Liberation Sans", Arial, sans-serif; }
.tools { display: flex; flex-direction: column; align-items: center; }
.tile { display: grid; place-items: center; width: 44px; height: 36px; border: 2px solid #fafafa; border-width: 2px 3px; border-bottom: 2px solid #c8c8c8; color: #fff; }
.tile svg { width: 38px; height: 32px; padding: 4px 7px; border: 1px solid #26303c; background: linear-gradient(#0660ae, #0a90f8); }
.tools > .dots { width: 30px; margin: 3px 0 2px; background-image: radial-gradient(circle, #888 1px, transparent 1px); }
.tools hr, .side hr { width: 38px; height: 1px; margin: 3px 0 2px; border: 0; background: #a8a8a8; }
.stackicons { display: grid; grid-auto-rows: 31px; place-items: center; } .stackicons.tight { grid-auto-rows: 28px; }
.stackicons svg { width: 24px; height: 24px; }
.content { display: flex; flex-direction: column; min-width: 0; border: 1px solid #a0a0a0; border-width: 0 1px; }
.pmenu { display: flex; align-items: center; gap: 16px; height: 23px; padding-left: 9px; background: #f6f6f6; }
.content h2 { height: 25px; padding-left: 7px; background: #a0a0a0; color: #fff; font: bold 16px/24px "Liberation Sans", Arial, sans-serif; }
.groups li { height: 18px; padding-left: 4px; border-bottom: 1px solid #b0b0b0; background: linear-gradient(#fff, #f6f6f6); line-height: 18px; }
.items { flex: 1; padding-top: 2px; }
.items li { display: flex; align-items: center; gap: 6px; height: 29px; padding-left: 4px; }
.items svg { width: 24px; height: 24px; }
.modes li { height: 24px; padding-left: 10px; border-top: 1px solid #a0a0a0; background: linear-gradient(#fcfcfc, #f0f0f0); font-weight: 700; line-height: 23px; }
.modes .on { background: #d8e8f6; }
.side { display: flex; flex-direction: column; align-items: center; margin-bottom: 16px; padding-top: 3px; background: #fafafa; color: #000; }
.side .dots { width: 18px; margin-bottom: 5px; background-image: radial-gradient(circle, #888 1px, transparent 1px); } .side hr { width: 22px; margin: 7px 0 1px; }
.sideicons { display: grid; grid-auto-rows: 31px; place-items: center; }
.sideicons svg { width: 22px; height: 24px; }

.stage { flex: 1; min-width: 0; display: grid; grid-template: 1fr 17px 80px / 1fr 15px; padding-left: 4px; }
.viewport { position: relative; overflow: hidden; background: #000; }
.model { width: 100%; height: 100%; }
.c { fill: none; stroke: #00c4c4; } .g { fill: none; stroke: #777; } .w { fill: none; stroke: #d0d0d0; stroke-width: 1.5; } .w2 { fill: none; stroke: #e0e0e0; stroke-width: 2; }
.c, .c path { shape-rendering: crispEdges; }
.yf { fill: #ffff00; }
.y { fill: #c0c000; font: 5px "Liberation Sans", sans-serif; }
.t5, .t7, .t9, .t10 { fill: #f0f0f0; font: 9px "Liberation Sans", sans-serif; }
.t5 { font-size: 5px; } .t7 { font-size: 7px; } .t10 { font-size: 10px; } .y.t7 { fill: #c0c000; }
.c8 { fill: #00d8d8; font: 8px "Liberation Sans", sans-serif; }
.c15 { fill: #00ffff; font: 15px "DejaVu Sans", sans-serif; }
.label { fill: #e8e8e8; font: 11px "Open Sans", sans-serif; }
.mid { text-anchor: middle; } .end { text-anchor: end; }
.cube { position: absolute; top: 12px; right: 14px; display: flex; flex-direction: column; align-items: center; gap: 13px; }
.cube text { text-anchor: middle; font: bold 20px "Liberation Sans", sans-serif; fill: #a0a0a0; }
.cube .top { font-size: 13px; fill: #50535c; }
.wcs { width: 48px; height: 18px; border: 1px solid #a0a2aa; border-radius: 5px; background: #85878f; color: #3c3e46; font-size: 11px; line-height: 14px; white-space: nowrap; }
.vscroll, .hscroll { display: flex; align-items: center; justify-content: center; background: #f0f0f0; }
.vscroll { padding-bottom: 54px; }
.vscroll i { width: 2px; height: 18px; background: #888; }
.hscroll { grid-column: 1 / 3; justify-content: flex-end; padding-right: 214px; }
.hscroll i { width: 17px; height: 2px; background: #888; }
.command { grid-column: 1 / 3; display: flex; margin: 4px 0 5px; border: 1px solid #222933; border-width: 1px 0; }
.handle { display: flex; flex-direction: column; align-items: center; gap: 8px; width: 25px; padding-top: 3px; background: #2e3542; color: #d0d4d8; }
.handle .dots { width: 18px; height: 6px; }
.lines { flex: 1; display: flex; flex-direction: column; color: #111; }
.lines pre { flex: 1; padding: 2px 2px 0; background: #c8c8c8; }
.lines pre, .prompt, .prompt input { font: 12px/15px "Liberation Mono", "DejaVu Sans Mono", monospace; }
.prompt { display: flex; align-items: center; gap: 4px; height: 21px; padding-left: 4px; border-top: 1px solid #222933; background: #fff; }
.prompt .i8 { color: #666; }
.prompt input { flex: 1; border: 0; padding: 0; color: #111; outline: 0; }

/* status bar */
.status { display: flex; justify-content: space-between; height: 31px; border-bottom: 2px solid #4a4a4c; background: #222933; font-size: 11px; color: #e0e2e6; }
.layouts { display: flex; align-items: center; height: 25px; padding-left: 13px; }
.layouts .slash { height: 18px; margin: 0 8px 0 7px; }
.layouts .on { height: 25px; margin: 0 7px 0 9px; padding: 0 17px; background: #3b4453; clip-path: polygon(9px 0, 100% 0, calc(100% - 9px) 100%, 0 100%); font-weight: 700; line-height: 25px; }
.modesbar { display: flex; gap: 2px; height: 24px; margin-top: 2px; }
.cell { display: flex; align-items: center; gap: 2px; padding: 0 1px; background: #3b4453; white-space: nowrap; }
.cell svg { width: 22px; height: 22px; padding: 2px; }
.cell .dd { width: 15px; padding: 4px; }
.cell .on { background: #5c8cc4; color: #fff; } .cell .dim { background: #4a6690; }
.coords { width: 180px; justify-content: flex-end; padding-right: 5px; } .word { padding: 0 3px; }
.unit { padding: 0 8px 0 6px; }

/* dialogs */
.progress { position: absolute; left: 50%; top: 162px; width: 354px; margin-left: -178px; border: 3px solid #0078d4; background: #f0f0f0; color: #111; font: 12px/16px "Liberation Sans", Arial, sans-serif; }
.progress h2 { display: flex; align-items: center; gap: 5px; height: 29px; padding: 0 0 3px 3px; background: #141414; color: #fff; }
.pcontent { padding: 3px 11px 9px 10px; }
.pcontent span { padding-left: 2px; }
.track { height: 17px; margin-top: 21px; border: 1px solid #bcbcbc; background: #e6e6e6; }
.track i { display: block; height: 100%; background: #06b025; }
.error { position: absolute; left: 50%; top: 614px; width: 430px; margin-left: -216px; border-radius: 7px; background: #f0f0f0; overflow: hidden; color: #111; font: 11px/13px "Liberation Sans", Arial, sans-serif; box-shadow: 0 0 0 1px #444; }
.error h2 { display: flex; align-items: center; gap: 6px; height: 31px; padding: 0 7px 0 8px; background: #f3f3f3; color: #888; font-family: "Open Sans", sans-serif; font-size: 11px; }
.error h2 span { flex: 1; }
.tb { width: 16px; height: 16px; background: #0a4a80; color: #fff; font: bold 9px/16px "Liberation Sans", sans-serif; text-align: center; }
.message { display: flex; gap: 10px; padding: 8px; height: 94px; }
.message p { margin-bottom: 12px; font-size: 11px; white-space: nowrap; }
.actions { display: flex; justify-content: space-between; padding: 0 9px 10px; }
.actions button { display: flex; align-items: center; justify-content: center; width: 98px; height: 21px; border: 1px solid #d0d0d0; border-radius: 4px; background: #fdfdfd; }
.actions .details { border-color: #0078d4; padding-left: 7px; }
.details span { flex: 1; padding-right: 14px; }
```
